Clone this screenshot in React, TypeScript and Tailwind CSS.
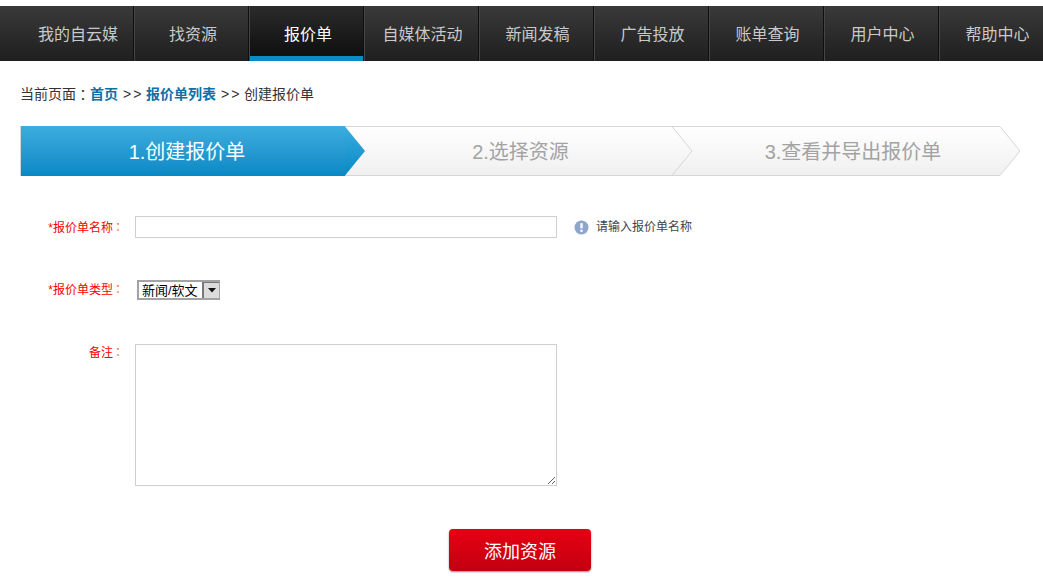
import React from 'react';

const FONT = "font-['Liberation_Sans','Noto_Sans_CJK_SC',sans-serif]";
const COLON = "font-['Noto_Sans_CJK_TC',sans-serif] inline-block -ml-[1px] mr-[1px] text-[#f07030]";

const navItems = ['我的自云媒', '找资源', '报价单', '自媒体活动', '新闻发稿', '广告投放', '账单查询', '用户中心', '帮助中心'];

const Arrow: React.FC<{ left: number; active?: boolean; filled?: boolean }> = ({ left, active, filled }) => (
  <svg
    className="absolute top-0 z-10"
    style={{ left }}
    width="21"
    height="50"
    viewBox="0 0 21 50"
  >
    <defs>
      <linearGradient id={`stepBlue${left}`} gradientUnits="userSpaceOnUse" x1="0" y1="0" x2="0" y2="50">
        <stop offset="0" stopColor="#3cadde" />
        <stop offset="1" stopColor="#0688c5" />
      </linearGradient>
      <linearGradient id={`stepGray${left}`} gradientUnits="userSpaceOnUse" x1="0" y1="1" x2="0" y2="49">
        <stop offset="0" stopColor="#ffffff" />
        <stop offset="1" stopColor="#f0f0f0" />
      </linearGradient>
    </defs>
    {active ? (
      <path d="M0 0.5 L20 25 L0 49.5 Z" fill={`url(#stepBlue${left})`} />
    ) : (
      <path
        d="M0 0.5 L20 25 L0 49.5"
        fill={filled ? `url(#stepGray${left})` : 'none'}
        stroke="#d6d6d6"
        strokeWidth="1"
      />
    )}
  </svg>
);

const App: React.FC = () => {
  return (
    <div className={`${FONT} w-[1043px] h-[588px] bg-white overflow-hidden`}>
      {/* top nav */}
      <div className="mt-[6px] h-[55px] flex overflow-hidden bg-gradient-to-b from-[#3a3a3a] to-[#1f1f1f]">
        <div className="w-[19px] flex-none" />
        {navItems.map((item, i) => {
          const current = item === '报价单';
          return (
            <div
              key={item}
              className={`w-[115px] flex-none h-full flex items-center justify-center text-base box-border pt-[3px] relative ${
                i < 2 ? 'pl-[4px]' : 'pl-[3px]'
              } ${
                current
                  ? 'text-white bg-gradient-to-b from-[#2b2b2b] to-[#0d0d0d] border-l border-r border-l-[#444444] border-r-[#0f0f0f]'
                  : 'text-[#c9c9c9] border-r border-[#0f0f0f]'
              } ${!current && i > 0 ? 'shadow-[inset_1px_0_0_#454545]' : ''}`}
            >
              {item}
              {current && <div className="absolute left-0 right-0 bottom-0 h-[5px] bg-[#0a8ac6]" />}
            </div>
          );
        })}
      </div>

      {/* breadcrumb */}
      <div className="mt-[25px] ml-[20px] h-[16px] leading-[16px] text-sm text-[#333333] flex">
        <span>当前页面</span>
        <span className="font-['Noto_Sans_CJK_TC',sans-serif] w-[14px]">：</span>
        <a className="font-bold text-[#0f6fa8]">首页</a>
        <span className="mx-[5px] tracking-[2px] w-[18px]">&gt;&gt;</span>
        <a className="font-bold text-[#0f6fa8]">报价单列表</a>
        <span className="mx-[5px] tracking-[2px] w-[18px]">&gt;&gt;</span>
        <span>创建报价单</span>
      </div>

      {/* steps */}
      <div className="relative mt-[24px] ml-[20px] w-[1000px] h-[50px] flex">
        <div className="w-[325px] flex-none h-full bg-gradient-to-b from-[#3cadde] to-[#0688c5] border-l border-[#c9d9e2] flex items-center justify-center text-white text-[20px] pl-[8px] pt-[2px]">
          1.创建报价单
        </div>
        <div className="w-[327px] flex-none h-full bg-gradient-to-b from-white to-[#f0f0f0] border-y border-[#d6d6d6] flex items-center justify-center text-[#a3a3a3] text-[20px] pl-[24px] pt-[2px]">
          2.选择资源
        </div>
        <div className="w-[328px] flex-none h-full bg-gradient-to-b from-white to-[#f0f0f0] border-y border-[#d6d6d6] flex items-center justify-center text-[#a3a3a3] text-[20px] pl-[34px] pt-[2px]">
          3.查看并导出报价单
        </div>
        <Arrow left={325} active />
        <Arrow left={652} />
        <Arrow left={980} filled />
      </div>

      {/* form */}
      <div className="mt-[40px] flex flex-col">
        <div className="flex items-center h-[22px]">
          <label className="w-[125px] flex-none text-right text-xs text-[#ff0000]">
            *报价单名称<span className={COLON}>：</span>
          </label>
          <input className="ml-[10px] w-[422px] h-[22px] border border-[#cfcfcf] outline-none box-border" />
          <svg className="ml-[17px]" width="15" height="15" viewBox="0 0 15 15">
            <circle cx="7.5" cy="7.5" r="7" fill="#8fa5cc" />
            <rect x="6.2" y="3" width="2.6" height="5.6" rx="1" fill="#f1f4fa" />
            <circle cx="7.5" cy="10.8" r="1.4" fill="#f1f4fa" />
          </svg>
          <span className="ml-[7px] text-xs text-[#444444]">请输入报价单名称</span>
        </div>

        <div className="flex items-center mt-[42px] h-[20px]">
          <label className="w-[125px] flex-none text-right text-xs text-[#ff0000] pb-[2px]">
            *报价单类型<span className={COLON}>：</span>
          </label>
          <div className="ml-[12px] w-[83px] h-[20px] border-2 border-[#a3a3a3] border-r-[1px] box-border flex items-center justify-between bg-white">
            <span className="pl-[3px] text-[13px] text-black leading-none">新闻/软文</span>
            <div className="w-[17px] h-full bg-[#dcdcdc] border-l-2 border-t border-[#777777] flex items-center justify-center">
              <svg width="8" height="5" viewBox="0 0 8 5">
                <path d="M0 0 H8 L4 4.5 Z" fill="#111111" />
              </svg>
            </div>
          </div>
        </div>

        <div className="flex items-start mt-[44px]">
          <label className="w-[125px] flex-none text-right text-xs text-[#ff0000]">
            备注<span className={COLON}>：</span>
          </label>
          <textarea className="ml-[10px] w-[422px] h-[142px] border border-[#cfcfcf] outline-none box-border" />
        </div>

        <div className="flex mt-[43px] ml-[449px]">
          <button className="w-[142px] h-[42px] rounded-[4px] bg-gradient-to-b from-[#e60012] to-[#c20010] text-white text-lg pt-[3px] shadow-[0_1px_2px_rgba(0,0,0,0.45)] flex items-center justify-center">
            添加资源
          </button>
        </div>
      </div>
    </div>
  );
};

export default App;
